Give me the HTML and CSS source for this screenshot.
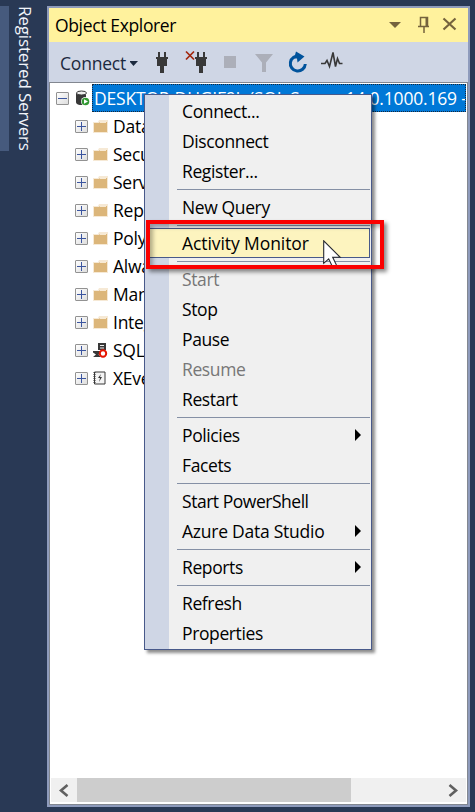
FILE: index.html
```html
<!DOCTYPE html>
<html lang="en">
<head>
<meta charset="utf-8">
<title>Object Explorer</title>
<link rel="stylesheet" href="styles.css">
</head>
<body>
<svg class="defs" width="0" height="0">
  <defs>
    <linearGradient id="boxfill" x1="0" y1="0" x2="1" y2="1"><stop offset="0" stop-color="#fff"/><stop offset="1" stop-color="#dcdcdc"/></linearGradient>
    <symbol id="plus" viewBox="0 0 13 13"><rect x=".5" y=".5" width="12" height="12" rx=".5" fill="url(#boxfill)" stroke="#929292"/><path d="M2 6.5h9M6.5 2v9" stroke="#3b559f"/></symbol>
    <symbol id="folder" viewBox="0 0 15 13"><path d="M0 2h5l1-2h9v13H0z" fill="#f6e9d5"/><path d="M1 3h5l1-1h7v10H1z" fill="#dcb67a"/><path d="M7 2.5h6" stroke="#f8ead3"/></symbol>
    <symbol id="plug" viewBox="0 0 12 22"><path d="M2 0h2v5h4V0h2v5h2v2h-1v7H8v7H4v-7H1V7H0V5h2z" fill="#383838"/></symbol>
  </defs>
</svg>
<div class="app">
  <aside class="rail"><div class="marker"></div><div class="railtext">Registered Servers</div></aside>
  <main class="panel">
    <header class="title"><span class="caption">Object Explorer</span>
      <svg width="72" height="20" viewBox="0 0 72 20"><g fill="none" stroke="#75633d"><path d="M1 7h12L7 13z" fill="#75633d" stroke="none"/><path d="M32.500 11V2.500h7V11M30 11.500h11M36 12v6" stroke-width="1.500"/><path d="M38.500 2v9" stroke-width="2"/><path d="M55.500 3.500l12 11m0-11l-12 11" stroke-width="2.200"/></g></svg>
    </header>
    <nav class="toolbar">
      <span class="connect">Connect</span>
      <svg width="285" height="40" viewBox="0 0 285 40">
        <path d="M-1 19h9l-4.500 5z" fill="#1b293e"/>
        <use href="#plug" x="26" y="10" width="12" height="22"/>
        <path d="M56 9.500l8 8m0-8l-8 8" stroke="#a1260d" stroke-width="1.700"/>
        <use href="#plug" x="65" y="10" width="12" height="22"/>
        <rect x="94" y="14" width="12" height="12" fill="#acafb9"/>
        <path d="M125 12h18l-7 8.500V30h-4v-9.500z" fill="#acafb9"/>
        <path d="M169.500 14.200a7.500 7.500 0 1 0 5.800 7.800" fill="none" stroke="#00539c" stroke-width="3"/>
        <path d="M166 9.500l8.500 5-7 6-.5-4h-3z" fill="#00539c"/>
        <path d="M191 21.500h4l2-3 2.500 6 3.500-14 2.500 14 2-8 2 5h3" fill="none" stroke="#383838" stroke-width="1.600"/>
      </svg>
    </nav>
    <section class="content">
      <div class="tree">
        <div class="root">
          <svg width="13" height="13"><rect x=".5" y=".5" width="12" height="12" rx=".5" fill="url(#boxfill)" stroke="#929292"/><path d="M2 6.500h9" stroke="#3b559f"/></svg>
          <svg class="server" width="16" height="17"><path d="M1 3v9c0 2.500 3 3 6 3h4V3z" fill="#383838"/><ellipse cx="6.500" cy="3" rx="5" ry="2" fill="#eee" stroke="#383838"/><circle cx="10.500" cy="11.500" r="4.500" fill="#fff"/><circle cx="10.500" cy="11.500" r="3.800" fill="#339933"/><path d="M9 9.200l4 2.300-4 2.300z" fill="#fff"/></svg>
          <div class="selected">DESKTOP-DUGIF9L (SQL Server 14.0.1000.169 - </div>
        </div>
        <div class="node"><svg class="exp"><use href="#plus"/></svg><svg class="ico"><use href="#folder"/></svg><span>Databases</span></div>
        <div class="node"><svg class="exp"><use href="#plus"/></svg><svg class="ico"><use href="#folder"/></svg><span>Security</span></div>
        <div class="node"><svg class="exp"><use href="#plus"/></svg><svg class="ico"><use href="#folder"/></svg><span>Server Objects</span></div>
        <div class="node"><svg class="exp"><use href="#plus"/></svg><svg class="ico"><use href="#folder"/></svg><span>Replication</span></div>
        <div class="node"><svg class="exp"><use href="#plus"/></svg><svg class="ico"><use href="#folder"/></svg><span>PolyBase</span></div>
        <div class="node"><svg class="exp"><use href="#plus"/></svg><svg class="ico"><use href="#folder"/></svg><span>Always On High Availability</span></div>
        <div class="node"><svg class="exp"><use href="#plus"/></svg><svg class="ico"><use href="#folder"/></svg><span>Management</span></div>
        <div class="node"><svg class="exp"><use href="#plus"/></svg><svg class="ico"><use href="#folder"/></svg><span>Integration Services Catalogs</span></div>
        <div class="node"><svg class="exp"><use href="#plus"/></svg><svg class="ico tall" viewBox="0 0 15 15"><path d="M5 0h8v7H5zM0 8h8v1.500L5.500 11.500 8 14H0l3-2.500-3-2z" fill="#383838"/><path d="M7 2.500h4M7 5h4" stroke="#eee"/><circle cx="10" cy="10.500" r="3.200" fill="#fff" stroke="#e51400" stroke-width="2"/></svg><span>SQL Server Agent</span></div>
        <div class="node"><svg class="exp"><use href="#plus"/></svg><svg class="ico tall" viewBox="0 0 15 15"><path d="M1.500 1h10.500v12H1.500z" fill="#f4f4f4" stroke="#383838"/><path d="M1.500 1v12" stroke="#383838" stroke-width="2" stroke-dasharray="1 1"/><path d="M8 3L5 7h2l-1 4 3-5H7z" fill="#383838"/></svg><span>XEvent Profiler</span></div>
      </div>
      <footer class="scroll"><svg width="26" height="24"><path d="M16.500 7L10 12.500l6.500 5.500" fill="none" stroke="#606060" stroke-width="2.600"/></svg><div class="thumb"></div><svg class="right" width="26" height="24"><path d="M9.500 7l6.500 5.500L9.500 18" fill="none" stroke="#606060" stroke-width="2.600"/></svg></footer>
    </section>
  </main>
  <div class="menu">
    <div class="item"><span>Connect...</span></div>
    <div class="item"><span>Disconnect</span></div>
    <div class="item"><span>Register...</span></div>
    <div class="sep"></div>
    <div class="item"><span>New Query</span></div>
    <div class="sep"></div>
    <div class="item active"><span>Activity Monitor</span></div>
    <div class="sep"></div>
    <div class="item disabled"><span>Start</span></div>
    <div class="item"><span>Stop</span></div>
    <div class="item"><span>Pause</span></div>
    <div class="item disabled"><span>Resume</span></div>
    <div class="item"><span>Restart</span></div>
    <div class="sep"></div>
    <div class="item sub"><span>Policies</span></div>
    <div class="item"><span>Facets</span></div>
    <div class="sep"></div>
    <div class="item tight"><span>Start PowerShell</span></div>
    <div class="item sub wide"><span>Azure Data Studio</span></div>
    <div class="sep"></div>
    <div class="item sub"><span>Reports</span></div>
    <div class="sep"></div>
    <div class="item"><span>Refresh</span></div>
    <div class="item"><span>Properties</span></div>
  </div>
  <svg class="cursor" width="20" height="28"><path d="M.7.8v22.500l5-4.500 4 8.500 4-1.700-4-8.300h7.500z" fill="#fff" stroke="#26282f" stroke-width="1.100"/></svg>
  <div class="highlight"></div>
</div>
</body>
</html>
```
FILE: styles.css
```css
* { box-sizing: border-box; }
body { margin: 0; font-family: "Open Sans", "Noto Sans", sans-serif; font-size: 17.5px; letter-spacing: -.15px; color: #000; }
svg { display: block; flex: none; }
.defs { position: absolute; }
.app { position: relative; display: flex; width: 475px; height: 812px; overflow: hidden; background: #293955; padding: 6px 5px 5px 0; }
.rail { display: flex; width: 47px; }
.marker { width: 9px; height: 145px; background: #465a7d; }
.railtext { writing-mode: vertical-rl; width: 28px; line-height: 28px; margin-left: 2px; color: #f1f4fa; white-space: nowrap; font-size: 17px; letter-spacing: -.15px; }
.panel { width: 423px; height: 801px; border: 2px solid #8e9bbc; display: flex; flex-direction: column; background: #fff; }
.title { height: 34px; background: #fff29d; display: flex; align-items: center; justify-content: space-between; padding: 0 8px 0 6px; }
.caption { letter-spacing: -.35px; }
.toolbar { height: 40px; background: #cfd6e5; display: flex; align-items: center; color: #1b293e; padding-left: 11px; }
.connect { width: 70px; white-space: nowrap; letter-spacing: -.2px; padding-top: 2px; }
.content { flex: 1; min-height: 0; border: 1px solid #828790; padding: 1px; display: flex; flex-direction: column; }
.tree { flex: 1; overflow: hidden; }
.root { height: 28px; display: flex; align-items: center; padding-left: 5px; }
.server { margin-left: 6px; }
.selected { margin-left: 1px; flex: 1; min-width: 0; height: 28px; line-height: 27px; padding-left: 1px; border: 1px dotted #f0a060; outline: 1px dotted #17283c; outline-offset: -1px; background: #0078d7; color: #fff; white-space: pre; overflow: hidden; letter-spacing: -.19px; }
.node { height: 28px; display: flex; align-items: center; padding-left: 24px; white-space: nowrap; letter-spacing: -.25px; }
.exp { width: 13px; height: 13px; }
.ico { width: 15px; height: 13px; margin: 0 5px; }
.tall { height: 15px; }
.scroll { height: 24px; background: #f0f0f0; display: flex; margin-bottom: 1px; }
.thumb { width: 274px; background: #cdcdcd; }
.right { margin-left: auto; }
.menu { position: absolute; left: 144px; top: 94px; width: 228px; height: 556px; padding: 2px 1px 1px 2px; border: 1px solid #48598a; background: linear-gradient(90deg, #cfd6e5 24px, #f0f0f0 24px); box-shadow: 3px 3px 3px rgba(0,0,0,.45); letter-spacing: -.38px; }
.item { height: 30px; line-height: 29px; padding-left: 35px; white-space: nowrap; position: relative; }
.sep { height: 6px; padding: 2px 0 0 30px; }
.sep::before { content: ""; display: block; height: 1px; background: #8590a5; }
.active { margin: -1px 0 1px; background: #fdf4bf; border: 1px solid #48598a; line-height: 29px; padding-left: 34px; letter-spacing: -.08px; }
.tight { letter-spacing: -.47px; }
.wide { letter-spacing: -.25px; }
.disabled { color: #777; }
.sub::after { content: ""; position: absolute; right: 9px; top: 8px; border: 6px solid transparent; border-left-color: #000; border-right: 0; }
.cursor { position: absolute; left: 323px; top: 240px; }
.highlight { position: absolute; left: 146px; top: 220px; width: 238px; height: 49px; border: 4px solid #fa0000; box-shadow: 3px 3px 4px rgba(0,0,0,.45), inset 3px 3px 4px rgba(0,0,0,.3); }
```
